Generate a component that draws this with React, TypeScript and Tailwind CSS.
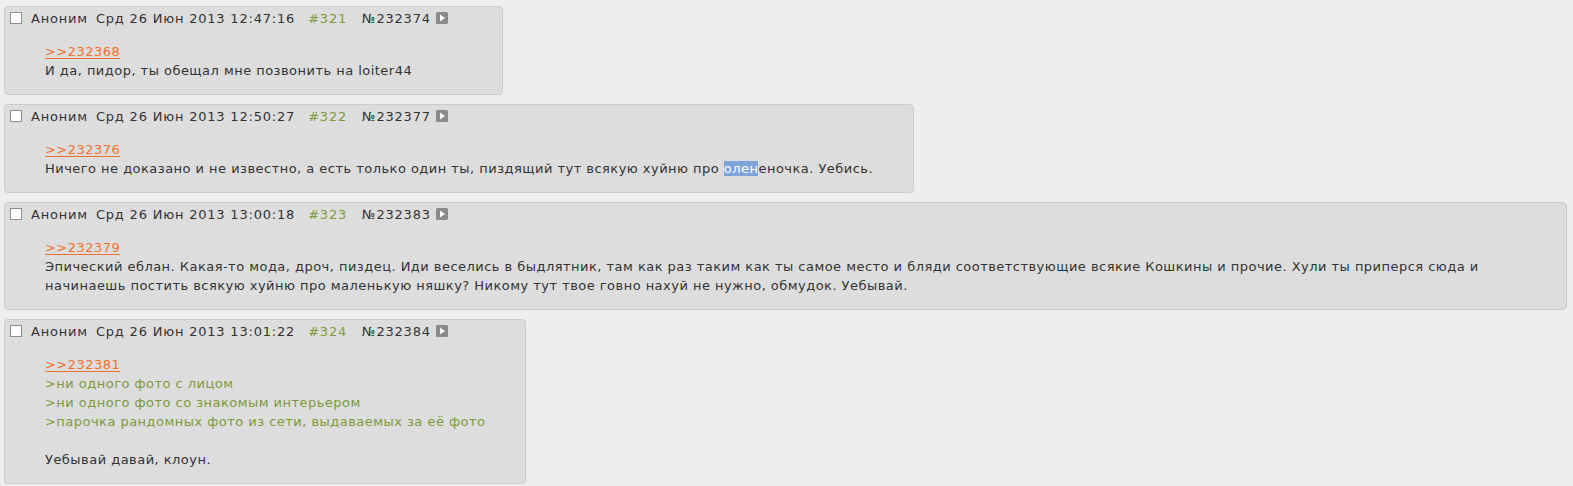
import React from "react";

/**
 * Imageboard thread fragment — four reply posts.
 */

type Line = { text: React.ReactNode; kind?: "link" | "quote" | "plain" | "blank" };

type Post = {
  time: string;
  index: number;
  num: number;
  lines: Line[];
  headerPad?: string;
};

const POSTS: Post[] = [
  {
    time: "Срд 26 Июн 2013 12:47:16",
    index: 321,
    num: 232374,
    headerPad: "pr-[54px]",
    lines: [
      { text: ">>232368", kind: "link" },
      { text: "И да, пидор, ты обещал мне позвонить на loiter44" },
    ],
  },
  {
    time: "Срд 26 Июн 2013 12:50:27",
    index: 322,
    num: 232377,
    lines: [
      { text: ">>232376", kind: "link" },
      {
        text: (
          <>
            Ничего не доказано и не известно, а есть только один ты, пиздящий тут всякую хуйню про{" "}
            <span className="bg-[#7ea3d8] text-white">олен</span>еночка. Уебись.
          </>
        ),
      },
    ],
  },
  {
    time: "Срд 26 Июн 2013 13:00:18",
    index: 323,
    num: 232383,
    lines: [
      { text: ">>232379", kind: "link" },
      {
        text: "Эпический еблан. Какая-то мода, дроч, пиздец. Иди веселись в быдлятник, там как раз таким как ты самое место и бляди соответствующие всякие Кошкины и прочие. Хули ты приперся сюда и начинаешь постить всякую хуйню про маленькую няшку? Никому тут твое говно нахуй не нужно, обмудок. Уебывай.",
      },
    ],
  },
  {
    time: "Срд 26 Июн 2013 13:01:22",
    index: 324,
    num: 232384,
    lines: [
      { text: ">>232381", kind: "link" },
      { text: ">ни одного фото с лицом", kind: "quote" },
      { text: ">ни одного фото со знакомым интерьером", kind: "quote" },
      { text: ">парочка рандомных фото из сети, выдаваемых за её фото", kind: "quote" },
      { text: "", kind: "blank" },
      { text: "Уебывай давай, клоун." },
    ],
  },
];

function PlayIcon() {
  return (
    <svg width="12" height="12" viewBox="0 0 12 12" className="ml-[2px] shrink-0" aria-hidden>
      <rect x="0" y="0" width="12" height="12" rx="1.5" fill="#8a8a8a" />
      <path d="M4 2.5 L9 6 L4 9.5 Z" fill="#ffffff" />
    </svg>
  );
}

function Reply({ post }: { post: Post }) {
  return (
    <div className="w-fit max-w-full rounded-[4px] border border-[#cccccc] bg-[#dddddd]">
      <div
        className={
          "flex h-[22px] items-center whitespace-nowrap pl-[5px] tracking-[0.8px] " + (post.headerPad ?? "")
        }
      >
        <span className="h-[12px] w-[12px] shrink-0 border border-[#8e8e8e] bg-white" />
        <span className="ml-[9px]">Аноним</span>
        <span className="ml-[8px]">{post.time}</span>
        <span className="ml-[13px] text-[#7d9a3a]">#{post.index}</span>
        <span className="ml-[15px] pr-[3px]">№{post.num}</span>
        <PlayIcon />
      </div>
      <blockquote className="mx-[40px] mb-[14px] mt-[13px] leading-[19px] tracking-[0.47px]">
        {post.lines.map((line, i) => {
          if (line.kind === "link")
            return (
              <div key={i}>
                <a className="text-[#f0702c] underline underline-offset-2">{line.text}</a>
              </div>
            );
          if (line.kind === "quote")
            return (
              <div key={i} className="text-[#7d9a3a]">
                {line.text}
              </div>
            );
          if (line.kind === "blank") return <div key={i} className="h-[19px]" />;
          return <div key={i}>{line.text}</div>;
        })}
      </blockquote>
    </div>
  );
}

export default function App() {
  return (
    <div className="min-h-[486px] bg-[#eeeeee] pl-[4px] pr-[6px] pt-[6px] font-['DejaVu_Sans',sans-serif] text-[13px] leading-[19px] text-[#333333]">
      <div className="flex flex-col items-start gap-[9px]">
        {POSTS.map((p) => (
          <Reply key={p.num} post={p} />
        ))}
      </div>
    </div>
  );
}
